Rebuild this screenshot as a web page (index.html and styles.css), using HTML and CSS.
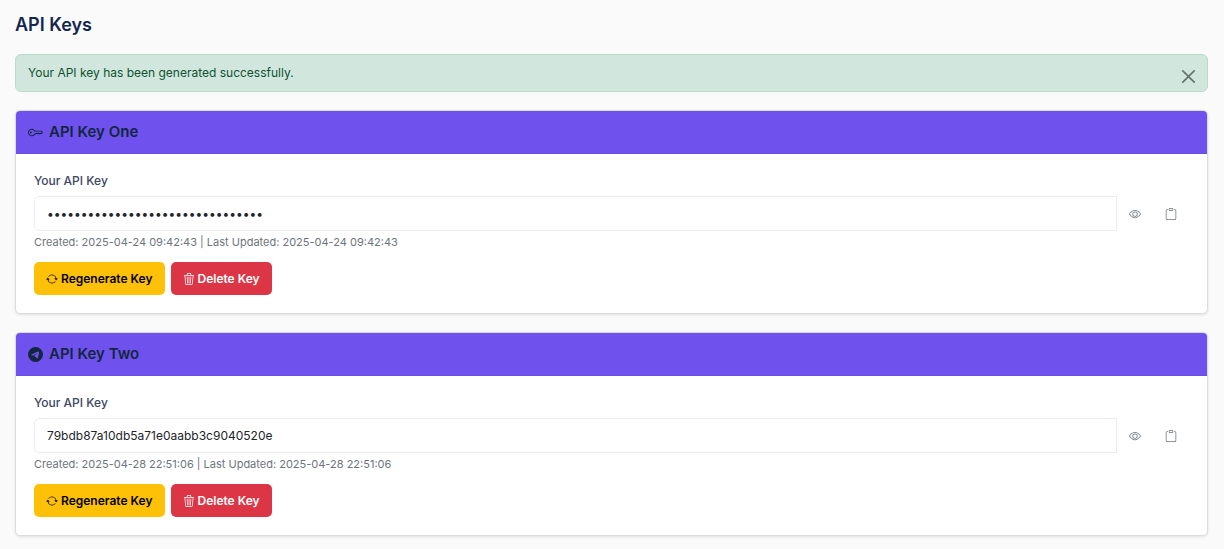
FILE: index.html
```html
<!DOCTYPE html>
<html lang="en">
<head>
  <meta charset="UTF-8">
  <meta name="viewport" content="width=device-width, initial-scale=1">
  <title>API Keys</title>
  <link rel="stylesheet" href="styles.css">
</head>
<body>

  <!-- Icons -->
  <svg class="sprite" xmlns="http://www.w3.org/2000/svg">
    <symbol id="icon-eye" viewBox="0 0 16 16">
      <path d="M16 8s-3-5.500-8-5.500S0 8 0 8s3 5.500 8 5.500S16 8 16 8M1.173 8a13 13 0 0 1 1.660-2.043C4.120 4.668 5.880 3.500 8 3.500s3.879 1.168 5.168 2.457A13 13 0 0 1 14.828 8q-.086.130-.195.288c-.335.480-.830 1.120-1.465 1.755C11.879 11.332 10.119 12.500 8 12.500s-3.879-1.168-5.168-2.457A13 13 0 0 1 1.172 8z"/>
      <path d="M8 5.500a2.500 2.500 0 1 0 0 5 2.500 2.500 0 0 0 0-5M4.500 8a3.500 3.500 0 1 1 7 0 3.500 3.500 0 0 1-7 0"/>
    </symbol>
    <symbol id="icon-clipboard" viewBox="0 0 16 16">
      <path d="M4 1.500H3a2 2 0 0 0-2 2V14a2 2 0 0 0 2 2h10a2 2 0 0 0 2-2V3.500a2 2 0 0 0-2-2h-1v1h1a1 1 0 0 1 1 1V14a1 1 0 0 1-1 1H3a1 1 0 0 1-1-1V3.500a1 1 0 0 1 1-1h1z"/>
      <path d="M9.500 1a.5.5 0 0 1 .5.5v1a.5.5 0 0 1-.5.5h-3a.5.5 0 0 1-.5-.5v-1a.5.5 0 0 1 .5-.5zm-3-1A1.500 1.500 0 0 0 5 1.500v1A1.500 1.500 0 0 0 6.500 4h3A1.500 1.500 0 0 0 11 2.500v-1A1.500 1.500 0 0 0 9.500 0z"/>
    </symbol>
    <symbol id="icon-repeat" viewBox="0 0 16 16">
      <path d="M11.534 7h3.932a.25.25 0 0 1 .192.410l-1.966 2.360a.25.25 0 0 1-.384 0l-1.966-2.360a.25.25 0 0 1 .192-.410m-11 2h3.932a.25.25 0 0 0 .192-.410L2.692 6.230a.25.25 0 0 0-.384 0L.342 8.590A.25.25 0 0 0 .534 9"/>
      <path fill-rule="evenodd" d="M8 3c-1.552 0-2.940.707-3.857 1.818a.5.5 0 1 1-.771-.636A6.002 6.002 0 0 1 13.917 7H12.900A5 5 0 0 0 8 3M3.100 9a5.002 5.002 0 0 0 8.757 2.182.5.5 0 1 1 .771.636A6.002 6.002 0 0 1 2.083 9z"/>
    </symbol>
    <symbol id="icon-trash" viewBox="0 0 16 16">
      <path d="M6.500 1h3a.5.5 0 0 1 .5.5v1H6v-1a.5.5 0 0 1 .5-.5M11 2.500v-1A1.500 1.500 0 0 0 9.500 0h-3A1.500 1.500 0 0 0 5 1.500v1H1.500a.5.5 0 0 0 0 1h.538l.853 10.660A2 2 0 0 0 4.885 16h6.230a2 2 0 0 0 1.994-1.840l.853-10.660h.538a.5.5 0 0 0 0-1zm1.958 1-.846 10.580a1 1 0 0 1-.997.920h-6.230a1 1 0 0 1-.997-.920L3.042 3.500zm-7.487 1a.5.5 0 0 1 .528.470l.5 8.500a.5.5 0 0 1-.998.060L5 5.030a.5.5 0 0 1 .470-.530zm5.058 0a.5.5 0 0 1 .470.530l-.5 8.500a.5.5 0 1 1-.998-.060l.5-8.500a.5.5 0 0 1 .528-.470M8 4.500a.5.5 0 0 1 .5.5v8.500a.5.5 0 0 1-1 0V5a.5.5 0 0 1 .5-.5"/>
    </symbol>
  </svg>

  <main class="page">
    <h1 class="page-title">API Keys</h1>

    <div class="alert" role="alert">
      <span>Your API key has been generated successfully.</span>
      <button type="button" class="btn-close" aria-label="Close">
        <svg viewBox="0 0 16 16"><path d="M.293.293a1 1 0 0 1 1.414 0L8 6.586 14.293.293a1 1 0 1 1 1.414 1.414L9.414 8l6.293 6.293a1 1 0 0 1-1.414 1.414L8 9.414l-6.293 6.293a1 1 0 0 1-1.414-1.414L6.586 8 .293 1.707a1 1 0 0 1 0-1.414"/></svg>
      </button>
    </div>

    <section class="card">
      <h2 class="card-header">
        <svg class="icon" viewBox="0 0 16 16">
          <path d="M0 8a4 4 0 0 1 7.465-2H14a.5.5 0 0 1 .354.146l1.500 1.500a.5.5 0 0 1 0 .708l-1.500 1.500a.5.5 0 0 1-.708 0L13 9.207l-.646.647a.5.5 0 0 1-.708 0L11 9.207l-.646.647a.5.5 0 0 1-.708 0L9 9.207l-.646.647A.5.5 0 0 1 8 10h-.535A4 4 0 0 1 0 8m4-3a3 3 0 1 0 2.712 4.285A.5.5 0 0 1 7.163 9h.630l.853-.854a.5.5 0 0 1 .708 0l.646.647.646-.647a.5.5 0 0 1 .708 0l.646.647.646-.647a.5.5 0 0 1 .708 0l.646.647.793-.793-1-1h-6.630a.5.5 0 0 1-.451-.285A3 3 0 0 0 4 5"/>
          <path d="M4 8a1 1 0 1 1-2 0 1 1 0 0 1 2 0"/>
        </svg>
        API Key One
      </h2>
      <div class="card-body">
        <label class="form-label" for="keyOne">Your API Key</label>
        <div class="input-group">
          <input type="password" id="keyOne" class="form-control" value="4c81e02fb96d47a3950be7d1286fa3c5" readonly>
          <button type="button" class="btn-icon" data-toggle="keyOne" aria-label="Show key"><svg class="icon"><use href="#icon-eye"/></svg></button>
          <button type="button" class="btn-icon" data-copy="keyOne" aria-label="Copy key"><svg class="icon"><use href="#icon-clipboard"/></svg></button>
        </div>
        <p class="meta">Created: 2025-04-24 09:42:43 | Last Updated: 2025-04-24 09:42:43</p>
        <div class="actions">
          <button type="button" class="btn btn-warning"><svg class="icon"><use href="#icon-repeat"/></svg>Regenerate Key</button>
          <button type="button" class="btn btn-danger"><svg class="icon"><use href="#icon-trash"/></svg>Delete Key</button>
        </div>
      </div>
    </section>

    <section class="card">
      <h2 class="card-header">
        <svg class="icon" viewBox="0 0 16 16">
          <path d="M16 8A8 8 0 1 1 0 8a8 8 0 0 1 16 0M8.287 5.906q-1.168.486-4.666 2.010-.567.225-.595.442c-.030.243.275.339.690.470l.175.055c.408.133.958.288 1.243.294q.390.010.868-.320 3.269-2.206 3.374-2.230c.050-.012.120-.026.166.016s.042.120.037.141c-.030.129-1.227 1.241-1.846 1.817-.193.180-.330.307-.358.336a8 8 0 0 1-.188.186c-.380.366-.664.640.015 1.088.327.216.589.393.850.571.284.194.568.387.936.629q.140.092.270.187c.331.236.630.448.997.414.214-.020.435-.220.547-.820.265-1.417.786-4.486.906-5.751a1.400 1.400 0 0 0-.013-.315.340.340 0 0 0-.114-.217.530.530 0 0 0-.310-.093c-.300.005-.763.166-2.984 1.090"/>
        </svg>
        API Key Two
      </h2>
      <div class="card-body">
        <label class="form-label" for="keyTwo">Your API Key</label>
        <div class="input-group">
          <input type="text" id="keyTwo" class="form-control" value="79bdb87a10db5a71e0aabb3c9040520e" readonly>
          <button type="button" class="btn-icon" data-toggle="keyTwo" aria-label="Show key"><svg class="icon"><use href="#icon-eye"/></svg></button>
          <button type="button" class="btn-icon" data-copy="keyTwo" aria-label="Copy key"><svg class="icon"><use href="#icon-clipboard"/></svg></button>
        </div>
        <p class="meta">Created: 2025-04-28 22:51:06 | Last Updated: 2025-04-28 22:51:06</p>
        <div class="actions">
          <button type="button" class="btn btn-warning"><svg class="icon"><use href="#icon-repeat"/></svg>Regenerate Key</button>
          <button type="button" class="btn btn-danger"><svg class="icon"><use href="#icon-trash"/></svg>Delete Key</button>
        </div>
      </div>
    </section>
  </main>

  <script>
    document.querySelectorAll("[data-toggle]").forEach(btn => {
      btn.addEventListener("click", () => {
        const input = document.getElementById(btn.dataset.toggle);
        input.type = input.type === "password" ? "text" : "password";
      });
    });

    document.querySelectorAll("[data-copy]").forEach(btn => {
      btn.addEventListener("click", () => {
        navigator.clipboard.writeText(document.getElementById(btn.dataset.copy).value);
      });
    });

    document.querySelector(".btn-close").addEventListener("click", () => {
      document.querySelector(".alert").remove();
    });
  </script>

</body>
</html>
```
FILE: styles.css
```css
* {
  box-sizing: border-box;
}

body {
  margin: 0;
  font-family: Inter, sans-serif;
  font-size: 12px;
  line-height: 20px;
  color: #212529;
  background-color: #fafafa;
}

button, input {
  font-family: inherit;
}

.sprite {
  display: none;
}

.icon {
  width: 12px;
  height: 12px;
  fill: currentColor;
  flex-shrink: 0;
}

.page {
  padding: 13px 16px 13px 15px;
}

.page-title {
  margin: 0 0 17px;
  font-size: 18px;
  line-height: 24px;
  font-weight: 600;
  color: #12264f;
}

.alert {
  display: flex;
  align-items: center;
  justify-content: space-between;
  padding: 8px 12px;
  margin-bottom: 18px;
  color: #0f5132;
  background-color: #d1e7dd;
  border: 1px solid #badbcc;
  border-radius: 6px;
}

.btn-close {
  display: flex;
  padding: 6px 0 0;
  border: none;
  background: none;
  opacity: 0.5;
  cursor: pointer;
}

.btn-close svg {
  width: 13px;
  height: 13px;
}

.card {
  margin-bottom: 18px;
  background-color: #fff;
  border: 1px solid #dcdcdc;
  border-radius: 5px;
  box-shadow: 0 1px 3px rgba(0, 0, 0, 0.1);
  overflow: hidden;
}

.card:last-child {
  margin-bottom: 0;
}

.card-header {
  display: flex;
  align-items: center;
  gap: 6px;
  margin: 0;
  padding: 11px 12px;
  font-size: 15px;
  line-height: 20px;
  font-weight: 600;
  color: #12263f;
  background-color: #6f52ed;
  border-bottom: 1px solid #6a50e0;
}

.card-header .icon {
  width: 15px;
  height: 15px;
}

.card-body {
  padding: 17px 18px 18px;
}

.form-label {
  display: block;
  margin-bottom: 5px;
  font-weight: 500;
  color: #3c4763;
}

.input-group {
  display: flex;
}

.form-control {
  flex: 1;
  min-width: 0;
  height: 35px;
  padding: 0 12px;
  font-size: 12px;
  color: #212529;
  background-color: #fff;
  border: 1px solid #e9ecf5;
  border-radius: 5px 0 0 5px;
}

.btn-icon {
  display: flex;
  align-items: center;
  justify-content: center;
  width: 36px;
  padding: 0;
  color: #6c757d;
  background: none;
  border: none;
  cursor: pointer;
}

.meta {
  margin: 3px 0 11px;
  font-size: 11px;
  line-height: 17px;
  color: #6c757d;
}

.actions {
  display: flex;
  gap: 6px;
}

.btn {
  display: flex;
  align-items: center;
  gap: 3px;
  height: 33px;
  padding: 0 12px;
  font-size: 12px;
  font-weight: 600;
  border: none;
  border-radius: 5px;
  cursor: pointer;
}

.btn-warning {
  color: #000;
  background-color: #ffc107;
}

.btn-danger {
  color: #fff;
  background-color: #dc3545;
}
```
